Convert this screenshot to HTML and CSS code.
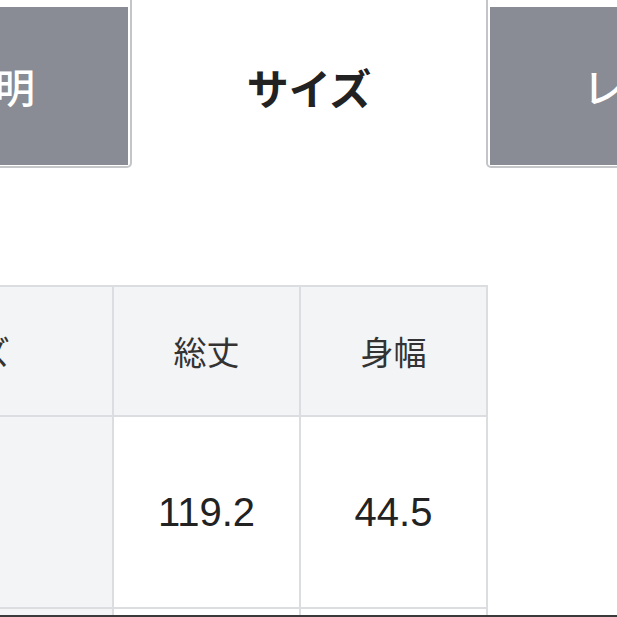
FILE: index.html
```html
<!DOCTYPE html>
<html lang="ja">
<head>
<meta charset="utf-8">
<link rel="stylesheet" href="styles.css">
</head>
<body>
<div class="page">
  <nav class="tabs">
    <div class="tab"><div class="tab-inner">商品説明</div></div>
    <div class="tab active"><div class="tab-inner">サイズ</div></div>
    <div class="tab"><div class="tab-inner">レビュー</div></div>
  </nav>
  <table class="size-table">
    <colgroup>
      <col class="c-first">
      <col class="c-val">
      <col class="c-val">
    </colgroup>
    <thead>
      <tr><th>サイズ</th><th>総丈</th><th>身幅</th></tr>
    </thead>
    <tbody>
      <tr class="r-main"><th></th><td>119.2</td><td>44.5</td></tr>
      <tr class="r-next"><th></th><td></td><td></td></tr>
    </tbody>
  </table>
</div>
<div class="screen-edge"></div>
</body>
</html>
```
FILE: styles.css
```css
html, body {
  margin: 0;
  padding: 0;
  background: #fff;
  overflow: hidden;
  height: 617px;
}
body {
  font-family: "Noto Sans CJK JP", "Noto Sans", sans-serif;
  color: #222;
}
.page {
  width: 617px;
  overflow: hidden;
}
.tabs {
  display: flex;
  margin-left: -222px;
  margin-top: -10px;
  width: 1062px;
}
.tab {
  box-sizing: border-box;
  width: 354px;
  height: 178px;
  flex: none;
  border: 2px solid #c3c5c9;
  border-radius: 5px;
  padding: 15px 2px 1px 2px;
  background: #fff;
  display: flex;
}
.tab-inner {
  flex: 1;
  background: #898c94;
  color: #fff;
  font-size: 40px;
  font-weight: 500;
  display: flex;
  align-items: center;
  justify-content: center;
  white-space: nowrap;
  overflow: hidden;
}
.tab.active {
  border-color: transparent;
  border-width: 0;
  padding: 17px 0 3px 0;
}
.tab.active .tab-inner {
  background: #fff;
  color: #222;
  font-weight: 700;
  font-size: 42px;
}
.size-table {
  margin-top: 117px;
  margin-left: -192px;
  border-collapse: collapse;
  table-layout: fixed;
  width: 679px;
}
.c-first { width: 304px; }
.c-val { width: 187px; }
.size-table th,
.size-table td {
  border: 2px solid #dcdde0;
  text-align: center;
  vertical-align: middle;
  padding: 0;
}
.size-table th {
  background: #f3f4f5;
  font-weight: 400;
  font-size: 33px;
  color: #333;
}
.size-table thead tr { height: 130px; }
.r-main { height: 192px; }
.r-next { height: 40px; }
.size-table td {
  background: #fff;
  font-family: "Liberation Sans", Arial, sans-serif;
  font-size: 40px;
  color: #222;
}
.screen-edge {
  position: fixed;
  left: 0;
  right: 0;
  bottom: 0;
  height: 2px;
  background: #3a3a3a;
}
```
